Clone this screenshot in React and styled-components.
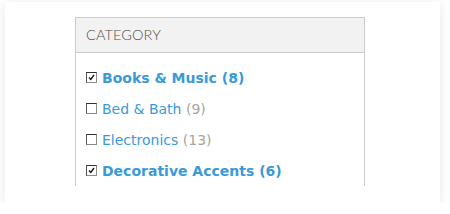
import React from "react";
import styled, { createGlobalStyle } from "styled-components";

const Global = createGlobalStyle`
  html, body { margin: 0; padding: 0; background: #ffffff; }
  body { font-family: "DejaVu Sans", Verdana, sans-serif; }
`;

const Card = styled.div`
  box-sizing: border-box;
  margin: 2px 10px 0 5px;
  width: 435px;
  height: 201px;
  background: #ffffff;
  box-shadow: 0 2px 10px rgba(0, 0, 0, 0.1);
  padding: 15px 0 0 70px;
`;

const Panel = styled.div`
  box-sizing: border-box;
  width: 290px;
  height: 169px;
  border: 1px solid #cccccc;
  border-bottom: none;
  overflow: hidden;
`;

const Header = styled.div`
  box-sizing: border-box;
  height: 35px;
  background: #f2f2f2;
  border-bottom: 1px solid #cccccc;
  padding: 0 10px 2px;
  display: flex;
  align-items: center;
  font-family: "Lato", "Open Sans", sans-serif;
  font-weight: 300;
  font-size: 14.5px;
  color: #4f4f4f;
  letter-spacing: 0.1px;
`;

const List = styled.ul`
  list-style: none;
  margin: 0;
  padding: 9px 0 0 10px;
`;

const Row = styled.li`
  height: 31px;
  display: flex;
  align-items: center;
  gap: 5px;
  font-size: 14px;
  font-weight: ${(p) => (p.$checked ? 700 : 400)};
  color: #3a9ad8;
`;

const Box = styled.span`
  box-sizing: border-box;
  width: 11px;
  height: 11px;
  border: 1px solid #8a8a8a;
  border-top-color: #333;
  border-left-color: #555;
  background: #fff;
  display: flex;
  align-items: center;
  justify-content: center;
  flex: none;
  margin-top: -1px;
`;

const Count = styled.span`
  color: ${(p) => (p.$checked ? "#3a9ad8" : "#a8a49e")};
`;

const items = [
  { name: "Books & Music", count: 8, checked: true },
  { name: "Bed & Bath", count: 9, checked: false },
  { name: "Electronics", count: 13, checked: false },
  { name: "Decorative Accents", count: 6, checked: true },
];

export default function App() {
  return (
    <>
      <Global />
      <Card>
        <Panel>
          <Header>CATEGORY</Header>
          <List>
            {items.map((it) => (
              <Row key={it.name} $checked={it.checked}>
                <Box>
                  {it.checked && (
                    <svg width="7" height="7" viewBox="0 0 7 7">
                      <path d="M1 3.5 L2.8 5.5 L6 1" stroke="#111" strokeWidth="1.3" fill="none" />
                    </svg>
                  )}
                </Box>
                <span>
                  {it.name} <Count $checked={it.checked}>({it.count})</Count>
                </span>
              </Row>
            ))}
          </List>
        </Panel>
      </Card>
    </>
  );
}
